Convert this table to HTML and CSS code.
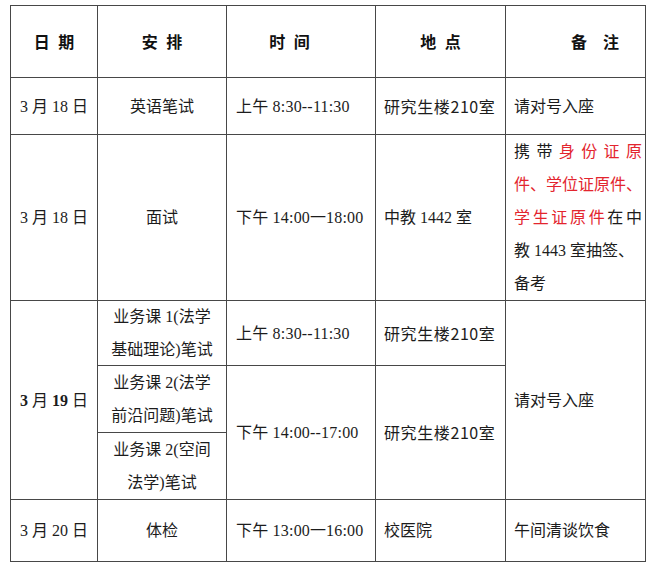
FILE: index.html
```html
<!DOCTYPE html>
<html lang="zh-CN">
<head>
<meta charset="utf-8">
<title>日程安排</title>
<link rel="stylesheet" href="styles.css">
</head>
<body>
<div class="sheet">
  <div class="cell head">日 期</div>
  <div class="cell head">安 排</div>
  <div class="cell head head-time">时 间</div>
  <div class="cell head">地 点</div>
  <div class="cell head head-note">备&emsp;注</div>

  <div class="cell center">3 月 18 日</div>
  <div class="cell center">英语笔试</div>
  <div class="cell time">上午 8:30--11:30</div>
  <div class="cell place sans">研究生楼210室</div>
  <div class="cell note">请对号入座</div>

  <div class="cell center">3 月 18 日</div>
  <div class="cell center">面试</div>
  <div class="cell time">下午 14:00<span class="dash">一</span>18:00</div>
  <div class="cell place">中教 1442 室</div>
  <div class="cell note note-long">
    <span class="ln just">携带<em>身份证原</em></span>
    <span class="ln just"><em>件、学位证原件、</em></span>
    <span class="ln just"><em>学生证原件</em>在中</span>
    <span class="ln">教 1443 室抽签、</span>
    <span class="ln">备考</span>
  </div>

  <div class="cell center span3"><span><b>3</b> 月 <b>19</b> 日</span></div>
  <div class="cell center two">业务课 1(法学<br>基础理论)笔试</div>
  <div class="cell time">上午 8:30--11:30</div>
  <div class="cell place sans">研究生楼210室</div>
  <div class="cell note span3">请对号入座</div>

  <div class="cell center two">业务课 2(法学<br>前沿问题)笔试</div>
  <div class="cell time span2">下午 14:00--17:00</div>
  <div class="cell place sans span2">研究生楼210室</div>

  <div class="cell center two">业务课 2(空间<br>法学)笔试</div>

  <div class="cell center">3 月 20 日</div>
  <div class="cell center">体检</div>
  <div class="cell time">下午 13:00<span class="dash">一</span>16:00</div>
  <div class="cell place">校医院</div>
  <div class="cell note">午间清谈饮食</div>
</div>
</body>
</html>
```

FILE: styles.css
```css
html, body {
  margin: 0;
  padding: 0;
  background: #ffffff;
}

body {
  font-family: "Liberation Serif", "Noto Sans CJK SC", serif;
  font-size: 16px;
  color: #1c1c1c;
}

.sheet {
  display: grid;
  grid-template-columns: 86px 128px 148px 129px 139px;
  grid-template-rows: 71px 56px 165px 64px 66px 66px 61px;
  gap: 1px;
  padding: 1px;
  background: #474747;
  width: max-content;
  margin: 5px 0 0 10px;
}

.cell {
  background: #ffffff;
  display: flex;
  align-items: center;
  white-space: pre;
  line-height: 33px;
}

.head {
  justify-content: center;
  font-family: "Noto Sans CJK SC", sans-serif;
  font-weight: 700;
  font-size: 16px;
  word-spacing: 5px;
  color: #111;
}

.head-time {
  padding-right: 23px;
}

.head-note {
  padding-left: 39px;
  word-spacing: 0;
}

.center {
  justify-content: center;
  text-align: center;
}

.center b {
  font-weight: 700;
}

.time {
  padding-left: 9px;
  letter-spacing: 0.2px;
}

.dash {
  letter-spacing: 0;
}

.place {
  padding-left: 8px;
}

.sans {
  font-family: "Noto Sans CJK SC", "Liberation Sans", sans-serif;
  letter-spacing: 0.6px;
}

.note {
  padding-left: 8px;
}

.note-long {
  flex-direction: column;
  align-items: stretch;
  justify-content: center;
  padding-right: 3px;
}

.ln {
  display: block;
  height: 33px;
  line-height: 33px;
}

.just {
  text-align: justify;
  text-align-last: justify;
}

.note-long em {
  font-style: normal;
  color: #e3252e;
}

.span3 {
  grid-row: span 3;
}

.span2 {
  grid-row: span 2;
}
```
